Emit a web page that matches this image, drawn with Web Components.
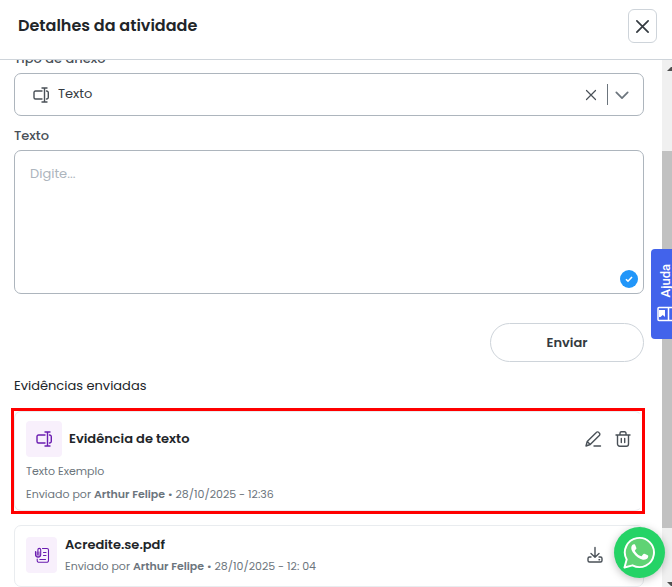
<!DOCTYPE html>
<html lang="pt-BR">
<head>
<meta charset="utf-8">
<meta name="viewport" content="width=device-width, initial-scale=1">
<title>Detalhes da atividade</title>
<style>
    body {
        margin: 0;
        background: #fff;
        color: #212529;
        font-family: Poppins, Inter, "Open Sans", sans-serif;
        font-size: 13px;
        line-height: 20px;
    }
</style>
</head>
<body>
<activity-dialog heading="Detalhes da atividade">
    <form-field label="Tipo de anexo"><type-select value="Texto"></type-select></form-field>
    <form-field label="Texto"><text-box placeholder="Digite..."></text-box></form-field>
    <send-bar>Enviar</send-bar>
    <evidence-list heading="Evidências enviadas">
        <evidence-card marked icon="text" heading="Evidência de texto" author="Arthur Felipe" date="28/10/2025 - 12:36" actions="edit trash">Texto Exemplo</evidence-card>
        <evidence-card compact icon="file" heading="Acredite.se.pdf" author="Arthur Felipe" date="28/10/2025 - 12: 04" actions="download trash"></evidence-card>
    </evidence-list>
</activity-dialog>
<help-tab>Ajuda</help-tab>
<whatsapp-button></whatsapp-button>

<script>
const ICONS = {
    text: `<path d="M9 4H2.500A1.500 1.500 0 0 0 1 5.500v5A1.500 1.500 0 0 0 2.500 12H9M13.500 4A1.700 1.700 0 0 1 15.300 5.700v4.600A1.700 1.700 0 0 1 13.500 12M9 1h5M9 15h5M11.500 1v14"/>`,
    file: `<path d="M8.500 1.500H13A1.500 1.500 0 0 1 14.500 3v10.500A1.800 1.800 0 0 1 12.700 15.300H5A1.800 1.800 0 0 1 3.200 13.500V12M5.800 12.500h5.700M9.500 5.500h2.500M9.500 8.500h2.500"/><path d="M1.500 4.500v3a2.600 2.600 0 0 0 5.200 0V2.800a1.400 1.400 0 0 0-2.800 0V7.500"/><path d="M1.500 4.500h5v3.200a2.500 2.500 0 0 1-5 0z" fill="currentColor" opacity=".45" stroke="none"/>`,
    edit: `<path d="M1 15l1.200-4.500L11.300 1.400a1.700 1.700 0 0 1 2.500 0l.5.500a1.700 1.700 0 0 1 0 2.500L5.200 13.500 1 15zM2.200 10.500l3 3M9 15h6.500"/>`,
    trash: `<path d="M1 4h14M2.500 4v9A2.200 2.200 0 0 0 4.700 15.200h6.600A2.200 2.200 0 0 0 13.500 13V4M5 4V2.200A1.400 1.400 0 0 1 6.400.8h3.200A1.400 1.400 0 0 1 11 2.200V4M6.300 7.500v4M9.700 7.500v4"/>`,
    download: `<path d="M8 .5v9.500M4 6.500L8 10.200l4-3.700M4 10H2.500A1.500 1.500 0 0 0 1 11.500v2A1.500 1.500 0 0 0 2.500 15h11a1.500 1.500 0 0 0 1.500-1.500v-2a1.500 1.500 0 0 0-1.500-1.500H12M12 12.700h.6"/>`,
    close: `<path d="M2 2l12 12M14 2L2 14"/>`,
    chevron: `<path d="M1.500 5L8 11.500 14.500 5"/>`
};

class UiIcon extends HTMLElement {
    connectedCallback() {
        const root = this.attachShadow({mode: 'open'});
        root.innerHTML = `
        <style>
            :host { display: block; flex: none; width: 16px; height: 16px; }
            svg { display: block; width: 100%; height: 100%; overflow: visible; }
            path { stroke-width: var(--icon-stroke, 1.4); }
        </style>
        <svg viewBox="0 0 16 16" fill="none" stroke="currentColor" stroke-linecap="round" stroke-linejoin="round" aria-hidden="true">${ICONS[this.getAttribute("name")]}</svg>
        `;
    }
}

class ActivityDialog extends HTMLElement {
    connectedCallback() {
        const root = this.attachShadow({mode: 'open'});
        root.innerHTML = `
        <style>
            :host { display: flex; flex-direction: column; height: 100vh; }
            header {
                display: flex; align-items: center; justify-content: space-between;
                flex: none;
                padding: 9px 15px 16px 18px;
                border-bottom: 1px solid #ced4da;
            }
            h1 { margin: 0; font-size: 16px; font-weight: 600; line-height: 24px; }
            button {
                display: grid; place-items: center;
                width: 29px; height: 34px; padding: 0;
                border: 1px solid #ced4da; border-radius: 6px;
                background: #fff; color: #343a40;
            }
            button ui-icon { width: 15px; height: 15px; --icon-stroke: 1.8; }
            .body { display: flex; flex: 1; min-height: 0; }
            main { flex: 1; min-width: 0; overflow: hidden; padding: 12px 18px 0 14px; }
            .end { height: 32px; }
            .track {
                display: flex; flex-direction: column; align-items: flex-end;
                flex: none; width: 10px; overflow: hidden;
                background: #f0f0f0; color: #505050;
            }
            .track svg { flex: none; width: 5px; height: 17px; }
            .before { flex: 74; }
            .thumb { flex: 377; width: 100%; background: #c1c1c1; }
            .after { flex: 42; }
        </style>
        <header>
            <h1>${this.getAttribute("heading")}</h1>
            <button type="button" aria-label="Fechar"><ui-icon name="close"></ui-icon></button>
        </header>
        <div class="body">
            <main><slot></slot><div class="end"></div></main>
            <div class="track">
                <svg viewBox="0 0 5 17" fill="currentColor"><path d="M0 11l4-4h1v4z"/></svg>
                <div class="before"></div>
                <div class="thumb"></div>
                <div class="after"></div>
                <svg viewBox="0 0 5 17" fill="currentColor"><path d="M0 12h5v4H4z"/></svg>
            </div>
        </div>
        `;
        this.view = root.querySelector("main");
    }

    scrollBody(top) { this.view.scrollTop = top; }
}

class FormField extends HTMLElement {
    connectedCallback() {
        const root = this.attachShadow({mode: 'open'});
        root.innerHTML = `
        <style>
            :host { display: grid; gap: 4px; margin-bottom: 10px; }
            label { font-weight: 500; color: #495057; }
        </style>
        <label>${this.getAttribute("label")}</label>
        <slot></slot>
        `;
        const control = this.firstElementChild;
        root.querySelector("label").addEventListener("click", () => control.focus());
    }
}

class TypeSelect extends HTMLElement {
    connectedCallback() {
        const root = this.attachShadow({mode: 'open', delegatesFocus: true});
        root.innerHTML = `
        <style>
            :host {
                display: flex; align-items: center;
                box-sizing: border-box; height: 43px; padding: 0 14px 0 18px;
                border: 1px solid #adb5bd; border-radius: 7px;
                color: #495057;
            }
            select {
                appearance: none; flex: 1; min-width: 0;
                margin: 0; padding: 0 0 2px 9px; border: 0; background: none;
                font: inherit; color: #343a40;
            }
            button { padding: 0; border: 0; background: none; color: inherit; }
            button ui-icon { width: 12px; height: 12px; --icon-stroke: 1.6; }
            .line { width: 1px; height: 21px; margin: 0 7px 0 10px; background: #6c757d; }
            .chevron { width: 14px; height: 14px; color: #6c757d; --icon-stroke: 2; }
        </style>
        <ui-icon name="text"></ui-icon>
        <select aria-label="${this.parentElement.getAttribute("label")}"><option>${this.getAttribute("value")}</option></select>
        <button type="button" aria-label="Limpar"><ui-icon name="close"></ui-icon></button>
        <span class="line"></span>
        <ui-icon class="chevron" name="chevron"></ui-icon>
        `;
    }
}

class TextBox extends HTMLElement {
    connectedCallback() {
        const root = this.attachShadow({mode: 'open', delegatesFocus: true});
        root.innerHTML = `
        <style>
            :host { display: block; position: relative; }
            textarea {
                display: block; box-sizing: border-box; width: 100%; height: 144px;
                padding: 13px 15px; resize: none;
                border: 1px solid #adb5bd; border-radius: 7px;
                background: #fff; font: inherit; color: inherit;
            }
            textarea::placeholder { color: #adb5bd; opacity: 1; }
            svg { position: absolute; right: 6px; bottom: 6px; width: 18px; height: 18px; }
        </style>
        <textarea aria-label="${this.parentElement.getAttribute("label")}" placeholder="${this.getAttribute("placeholder")}"></textarea>
        <svg viewBox="0 0 18 18" aria-hidden="true"><circle cx="9" cy="9" r="9" fill="#2196f9"/><path d="M6 9.200l2 2 4-4.200" fill="none" stroke="#fff" stroke-width="1.600"/></svg>
        `;
    }
}

class SendBar extends HTMLElement {
    connectedCallback() {
        const root = this.attachShadow({mode: 'open'});
        root.innerHTML = `
        <style>
            :host { display: flex; justify-content: flex-end; margin: 29px 0 14px; }
            button {
                width: 154px; height: 39px;
                border: 1px solid #ced4da; border-radius: 20px;
                background: #fff; font: inherit; font-weight: 600; color: #343a40;
            }
        </style>
        <button type="button"><slot></slot></button>
        `;
    }
}

class EvidenceList extends HTMLElement {
    connectedCallback() {
        const root = this.attachShadow({mode: 'open'});
        root.innerHTML = `
        <style>
            :host { display: block; }
            h2 { margin: 0 0 12px; font-size: 13px; font-weight: 400; line-height: 20px; }
            .cards { display: grid; gap: 11px; }
        </style>
        <h2>${this.getAttribute("heading")}</h2>
        <div class="cards"><slot></slot></div>
        `;
    }
}

class EvidenceCard extends HTMLElement {
    connectedCallback() {
        const root = this.attachShadow({mode: 'open'});
        const actions = this.getAttribute("actions").split(" ");
        const names = {edit: "Editar", trash: "Excluir", download: "Baixar"};
        const meta = `<p>Enviado por <b>${this.getAttribute("author")}</b> • ${this.getAttribute("date")}</p>`;
        const compact = this.hasAttribute("compact");
        root.innerHTML = `
        <style>
            :host { display: block; }
            :host([marked]) { margin: 0 -1px 0 -3px; border: 3px solid #f00; }
            article {
                display: grid; gap: 5px;
                padding: 9px 10px 7px 11px;
                border: 1px solid #e9ecef; border-radius: 7px;
            }
            :host([marked]) article { border-right-color: transparent; }
            :host([compact]) article { padding: 8px 12px 10px 11px; }
            .top { display: flex; align-items: center; gap: 7px; }
            .badge {
                display: grid; place-items: center;
                flex: none; width: 36px; height: 36px;
                border-radius: 4px; background: #f8f0fc; color: #6a1cb0;
            }
            :host([compact]) .top { gap: 8px; }
            :host([compact]) .badge { width: 31px; --icon-stroke: 1.1; }
            .info { flex: 1; min-width: 0; }
            h3 { margin: 0; font-size: 13px; font-weight: 600; line-height: 22px; }
            p { margin: 0; font-size: 11px; line-height: 18px; color: #6c757d; }
            :host([compact]) p { line-height: 20px; }
            b { font-weight: 600; }
            .actions { display: flex; gap: 14px; }
            :host([compact]) .actions { gap: 12px; }
            button { padding: 0; border: 0; background: none; color: #495057; }
        </style>
        <article>
            <div class="top">
                <span class="badge"><ui-icon name="${this.getAttribute("icon")}"></ui-icon></span>
                <div class="info"><h3>${this.getAttribute("heading")}</h3>${compact ? meta : ""}</div>
                <div class="actions">${actions.map(a => `<button type="button" aria-label="${names[a]}"><ui-icon name="${a}"></ui-icon></button>`).join("")}</div>
            </div>
            ${compact ? "" : `<p><slot></slot></p>${meta}`}
        </article>
        `;
    }
}

class HelpTab extends HTMLElement {
    connectedCallback() {
        const root = this.attachShadow({mode: 'open'});
        root.innerHTML = `
        <style>
            :host { position: fixed; top: 249px; right: 0; }
            button {
                display: flex; flex-direction: column; align-items: flex-start; gap: 9px;
                width: 21px; height: 90px; padding: 15px 0 0 6px; overflow: hidden;
                border: 0; border-radius: 4px 0 0 4px;
                background: #4263eb; color: #fff;
                font: 500 13px/18px Roboto, sans-serif;
            }
            span { writing-mode: vertical-rl; transform: rotate(180deg); }
            svg { flex: none; width: 16px; height: 16px; }
        </style>
        <button type="button">
            <span><slot></slot></span>
            <svg viewBox="0 0 16 16" fill="none" stroke="currentColor" stroke-width="1.500" aria-hidden="true"><rect x="1" y="1.500" width="18" height="13" rx="1"/><path d="M11.500 1.500v13"/><path d="M2 4h6v7L5.800 9 3.500 11H2z" fill="currentColor" stroke="none"/></svg>
        </button>
        `;
    }
}

class WhatsappButton extends HTMLElement {
    connectedCallback() {
        const root = this.attachShadow({mode: 'open'});
        root.innerHTML = `
        <style>
            :host { position: fixed; right: 7px; bottom: 9px; }
            a {
                display: grid; place-items: center; width: 51px; height: 51px;
                border-radius: 50%; background: #25d366;
                box-shadow: 0 2px 8px rgba(0, 0, 0, .25);
            }
            svg { width: 33px; height: 33px; }
        </style>
        <a href="#" aria-label="WhatsApp">
            <svg viewBox="0 0 34 34" aria-hidden="true">
                <path d="M1.500 32.500l2.300-8.200A15 15 0 1 1 9.800 30.200z" fill="#5fd374" stroke="#fff" stroke-width="2" stroke-linejoin="round"/>
                <path d="M12.600 9.200c-.4-.8-.8-.8-1.300-.8-1.400 0-2.800 1.600-2.800 4 0 2.300 1.700 4.500 2 4.900 2.700 4 6 6.300 10 7.200 2.500.5 4.900-1 5.300-2.500.2-.8.3-1.600 0-1.800-.8-.6-3-1.600-3.900-1.900-.5-.2-.8 0-1.100.4l-1.500 1.800c-.3.3-.6.400-1 .2-2.900-1.200-4.700-3-6-5.300-.2-.4 0-.6.200-.8.800-.9 1.500-1.600 1.300-2.300z" fill="#fff"/>
            </svg>
        </a>
        `;
    }
}

customElements.define("ui-icon", UiIcon);
customElements.define("activity-dialog", ActivityDialog);
customElements.define("form-field", FormField);
customElements.define("type-select", TypeSelect);
customElements.define("text-box", TextBox);
customElements.define("send-bar", SendBar);
customElements.define("evidence-list", EvidenceList);
customElements.define("evidence-card", EvidenceCard);
customElements.define("help-tab", HelpTab);
customElements.define("whatsapp-button", WhatsappButton);

document.querySelector("activity-dialog").scrollBody(23);
</script>
</body>
</html>
